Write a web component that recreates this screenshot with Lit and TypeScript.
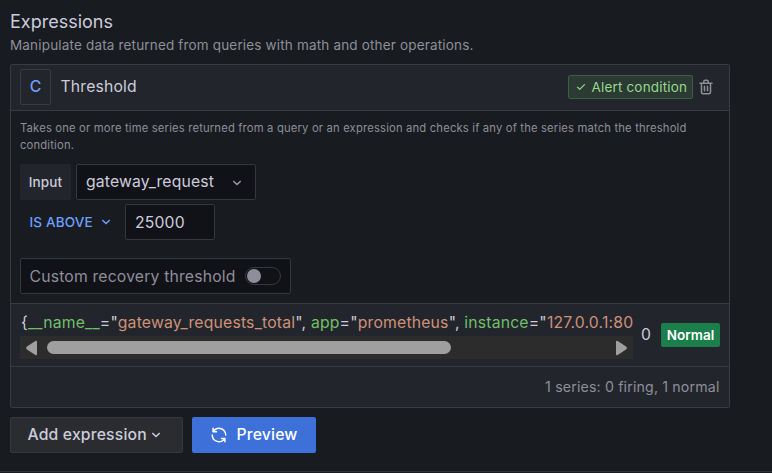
import { LitElement, html, css, svg } from "lit";
import { customElement, property } from "lit/decorators.js";

const ICONS: Record<string, string> = {
  "angle-down":
    "M17,9.17a1,1,0,0,0-1.41,0L12,12.71,8.46,9.17a1,1,0,0,0-1.41,0,1,1,0,0,0,0,1.42l4.24,4.24a1,1,0,0,0,1.42,0L17,10.59A1,1,0,0,0,17,9.17Z",
  check:
    "M18.71,7.21a1,1,0,0,0-1.42,0L9.84,14.67,6.71,11.53A1,1,0,1,0,5.29,13l3.84,3.84a1,1,0,0,0,1.42,0l8.16-8.16A1,1,0,0,0,18.71,7.21Z",
  trash:
    "M10,18a1,1,0,0,0,1-1V11a1,1,0,0,0-2,0v6A1,1,0,0,0,10,18ZM20,6H16V5a3,3,0,0,0-3-3H11A3,3,0,0,0,8,5V6H4A1,1,0,0,0,4,8H5V19a3,3,0,0,0,3,3h8a3,3,0,0,0,3-3V8h1a1,1,0,0,0,0-2ZM10,5a1,1,0,0,1,1-1h2a1,1,0,0,1,1,1V6H10Zm7,14a1,1,0,0,1-1,1H8a1,1,0,0,1-1-1V8H17Zm-3-1a1,1,0,0,0,1-1V11a1,1,0,0,0-2,0v6A1,1,0,0,0,14,18Z",
  sync:
    "M19.91,15.51H15.38a1,1,0,0,0,0,2h2.4A8,8,0,0,1,4,12a1,1,0,1,0-2,0,10,10,0,0,0,16.88,7.23V21a1,1,0,0,0,2,0V16.5A1,1,0,0,0,19.91,15.51ZM12,2A10,10,0,0,0,5.12,4.77V3a1,1,0,0,0-2,0V7.5a1,1,0,0,0,1,1h4.5a1,1,0,0,0,0-2H6.22A8,8,0,0,1,20,12a1,1,0,0,0,2,0A10,10,0,0,0,12,2Z",
};

@customElement("ui-icon")
export class UiIcon extends LitElement {
  @property() name = "";
  @property({ type: Number }) size = 18;

  static styles = css`
    :host {
      display: inline-flex;
      flex: none;
    }
    svg {
      display: block;
      fill: currentColor;
    }
  `;

  render() {
    return html`<svg width=${this.size} height=${this.size} viewBox="0 0 24 24">
      ${svg`<path d=${ICONS[this.name]}></path>`}
    </svg>`;
  }
}

@customElement("series-labels")
export class SeriesLabels extends LitElement {
  static styles = css`
    :host {
      display: block;
      width: 613px;
      flex: none;
    }
    .text {
      height: 25px;
      line-height: 23px;
      padding-left: 1px;
      overflow: hidden;
      white-space: nowrap;
      font-size: 15.75px;
      letter-spacing: 0.19px;
    }
    .key {
      color: #73bf69;
    }
    .value {
      color: #ce9178;
    }
    .scrollbar {
      display: flex;
      align-items: center;
      height: 23px;
      background: #2c2c2c;
      padding: 1px 5px 0;
      box-sizing: border-box;
    }
    .track {
      flex: 1;
      padding: 0 9px 1px 10px;
    }
    .thumb {
      width: 404px;
      height: 13px;
      border-radius: 7px;
      background: #9f9f9f;
    }
    .arrow {
      display: block;
      fill: #9f9f9f;
    }
  `;

  render() {
    const labels = [
      ["__name__", "gateway_requests_total"],
      ["app", "prometheus"],
      ["instance", "127.0.0.1:80"],
    ];
    return html`
      <div class="text">{${labels.map(
        ([k, v], i) =>
          html`<span class="key">${k}</span>="<span class="value">${v}</span>${i < labels.length - 1 ? '", ' : ""}`
      )}</div>
      <div class="scrollbar">
        <svg class="arrow" width="12" height="16" viewBox="0 0 12 16">
          <path d="M10.3 1 Q12 .3 12 2 V14 Q12 15.700 10.300 15 L1.600 9.200 Q.6 8 1.600 6.800 Z"></path>
        </svg>
        <div class="track"><div class="thumb"></div></div>
        <svg class="arrow" width="12" height="16" viewBox="0 0 12 16">
          <path d="M1.700 1 Q0 .3 0 2 V14 Q0 15.700 1.700 15 L10.400 9.200 Q11.400 8 10.400 6.800 Z"></path>
        </svg>
      </div>
    `;
  }
}

@customElement("app-root")
export class AppRoot extends LitElement {
  static styles = css`
    :host {
      display: block;
      box-sizing: border-box;
      height: 473px;
      overflow: hidden;
      background: #181b1f;
      color: #ccccdc;
      font-family: Inter, "Liberation Sans", sans-serif;
      font-size: 15.75px;
      letter-spacing: 0.16px;
    }
    * {
      box-sizing: border-box;
    }
    .page {
      display: flex;
      flex-direction: column;
      height: 472px;
      padding: 10px 0 0 10px;
      border-bottom: 1px solid #2e3136;
    }
    .heading {
      font-size: 18px;
      line-height: 24px;
      letter-spacing: 0;
    }
    .sub {
      font-size: 13.5px;
      line-height: 20px;
      letter-spacing: 0.17px;
      margin-top: 1px;
      color: #8e8e9a;
    }
    .card {
      width: 720px;
      height: 344px;
      margin-top: 9px;
      border: 1px solid #383b40;
      border-radius: 2px;
      display: flex;
      flex-direction: column;
    }
    .head {
      height: 46px;
      background: #22252b;
      border-bottom: 1px solid #383b40;
      display: flex;
      align-items: center;
      padding: 0 14px 2px 9px;
    }
    .ref {
      width: 31px;
      height: 36px;
      border: 1px solid #383b40;
      border-radius: 2px;
      display: flex;
      align-items: center;
      justify-content: center;
      color: #6e9fff;
      font-weight: 500;
      font-size: 15.75px;
    }
    .type {
      margin-left: 9.5px;
      flex: 1;
    }
    .badge {
      display: flex;
      align-items: center;
      width: 125px;
      white-space: nowrap;
      height: 24px;
      padding: 0 5px;
      gap: 3.5px;
      background: #2b3a33;
      border: 1px solid #3b5f41;
      border-radius: 2px;
      color: #96d98d;
      font-size: 13.5px;
      letter-spacing: 0.17px;
      margin-right: 4px;
    }
    .trash {
      color: #8e8e9a;
    }
    .body {
      height: 192px;
      padding: 9px;
    }
    .desc {
      font-size: 11.25px;
      line-height: 17px;
      letter-spacing: 0.165px;
      color: #8e8e9a;
      width: 690px;
    }
    .row {
      display: flex;
      gap: 5px;
    }
    .input-row {
      margin-top: 10px;
    }
    .label {
      width: 51px;
      height: 36px;
      border-radius: 2px;
      background: #22252b;
      font-size: 13.5px;
      font-weight: 500;
      display: flex;
      align-items: center;
      justify-content: center;
    }
    .field {
      display: flex;
      align-items: center;
      height: 36px;
      border: 1px solid #35383d;
      border-radius: 2px;
      background: #111217;
      padding: 0 9px;
      white-space: nowrap;
    }
    .select {
      width: 180px;
      justify-content: space-between;
      padding-bottom: 1px;
    }
    .select ui-icon {
      color: #9a9aa8;
      padding-top: 2px;
    }
    .op {
      display: flex;
      align-items: center;
      width: 100px;
      padding-left: 9.5px;
      gap: 4px;
      color: #6e9fff;
      font-size: 13.5px;
      font-weight: 500;
      letter-spacing: 0.17px;
    }
    .op-row {
      margin-top: 4px;
    }
    .number {
      width: 90px;
    }
    .recovery {
      width: 271px;
      margin-top: 18px;
      color: #8e8e9a;
      justify-content: space-between;
      padding-left: 8.5px;
      letter-spacing: 0.17px;
    }
    .switch {
      width: 36px;
      height: 18px;
      border: 1px solid #35383d;
      border-radius: 9px;
      display: flex;
      align-items: center;
      padding-left: 1px;
    }
    .knob {
      width: 14px;
      height: 14px;
      border-radius: 50%;
      background: #8e8e9a;
    }
    .result {
      height: 64px;
      background: #22252b;
      border-top: 1px solid #383b40;
      border-bottom: 1px solid #383b40;
      display: flex;
      align-items: center;
      padding: 0 9px;
    }
    .count {
      margin-left: 8px;
      width: 20px;
      padding-bottom: 1px;
    }
    .state {
      width: 59px;
      height: 24px;
      border-radius: 2px;
      background: #1a7f4b;
      color: #fff;
      font-size: 13.5px;
      font-weight: 600;
      letter-spacing: 0;
      display: flex;
      align-items: center;
      justify-content: center;
    }
    .summary {
      flex: 1;
      background: #22252b;
      display: flex;
      align-items: center;
      justify-content: flex-end;
      padding: 0 9.5px 2px;
      color: #8e8e9a;
      font-size: 14.2px;
      letter-spacing: 0.15px;
    }
    .actions {
      display: flex;
      gap: 9px;
      margin-top: 9px;
    }
    .btn {
      height: 36px;
      border-radius: 2px;
      display: flex;
      align-items: center;
      font-weight: 500;
      padding-bottom: 1px;
    }
    .add {
      width: 173px;
      padding-left: 16.5px;
      background: #2a2c30;
      border: 1px solid #35383d;
    }
    .preview {
      width: 124px;
      padding-left: 18px;
      gap: 8.5px;
      background: #3d71d9;
      color: #fff;
    }
  `;

  render() {
    return html`
      <div class="page">
        <div class="heading">Expressions</div>
        <div class="sub">Manipulate data returned from queries with math and other operations.</div>

        <div class="card">
          <div class="head">
            <div class="ref">C</div>
            <div class="type">Threshold</div>
            <div class="badge"><ui-icon name="check" size="14"></ui-icon>Alert condition</div>
            <ui-icon class="trash" name="trash" size="18"></ui-icon>
          </div>

          <div class="body">
            <div class="desc">
              Takes one or more time series returned from a query or an expression and checks if any of
              the series match the threshold condition.
            </div>
            <div class="row input-row">
              <div class="label">Input</div>
              <div class="field select">gateway_request<ui-icon name="angle-down" size="18"></ui-icon></div>
            </div>
            <div class="row op-row">
              <div class="op">IS ABOVE<ui-icon name="angle-down" size="18"></ui-icon></div>
              <div class="field number">25000</div>
            </div>
            <div class="field recovery">
              Custom recovery threshold
              <div class="switch"><div class="knob"></div></div>
            </div>
          </div>

          <div class="result">
            <series-labels></series-labels>
            <div class="count">0</div>
            <div class="state">Normal</div>
          </div>
          <div class="summary">1 series: 0 firing, 1 normal</div>
        </div>

        <div class="actions">
          <div class="btn add">Add expression<ui-icon name="angle-down" size="18"></ui-icon></div>
          <div class="btn preview"><ui-icon name="sync" size="18"></ui-icon>Preview</div>
        </div>
      </div>
    `;
  }
}
